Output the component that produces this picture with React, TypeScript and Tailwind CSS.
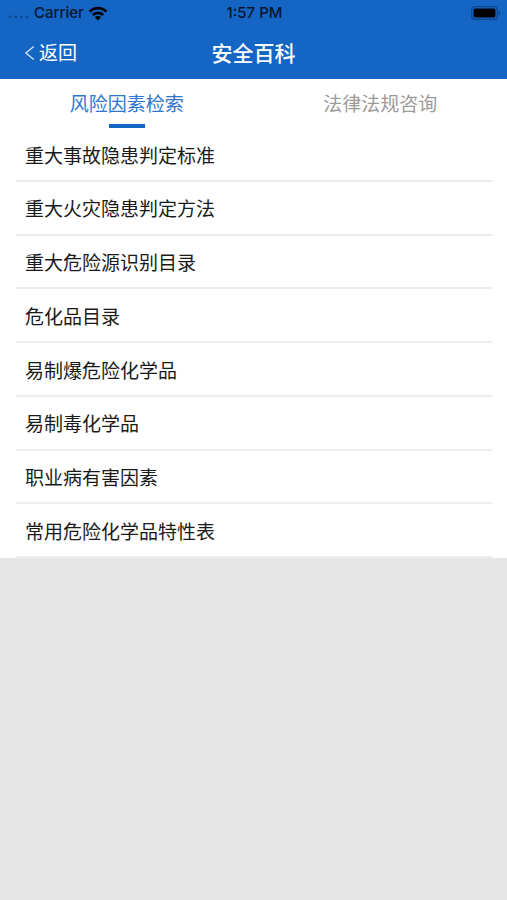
import { useState } from 'react';

const tabs = ['风险因素检索', '法律法规咨询'];

const riskItems = [
  '重大事故隐患判定标准',
  '重大火灾隐患判定方法',
  '重大危险源识别目录',
  '危化品目录',
  '易制爆危险化学品',
  '易制毒化学品',
  '职业病有害因素',
  '常用危险化学品特性表',
];

export default function App() {
  const [active, setActive] = useState(0);

  return (
    <div className="min-h-screen bg-[#e6e6e6] font-['Noto_Sans_CJK_SC',sans-serif] text-[19px]">
      <header className="bg-[#1565c4]">
        <StatusBar />
        <NavBar />
      </header>

      <main className="bg-white">
        <div role="tablist" className="grid h-[49px] grid-cols-2">
          {tabs.map((tab, index) => (
            <button
              key={tab}
              type="button"
              role="tab"
              aria-selected={active === index}
              onClick={() => setActive(index)}
              className={`flex flex-col items-center justify-between pt-3 leading-6 ${
                active === index ? 'text-[#2f76cc]' : 'text-[#9b9b9b]'
              }`}
            >
              {tab}
              <span className={`h-1 w-9 ${active === index ? 'bg-[#1565c4]' : ''}`} />
            </button>
          ))}
        </div>

        <ul className="mr-[15px] ml-4 grid h-[430px] auto-rows-fr">
          {riskItems.map((item) => (
            <li key={item} className="border-b-2 border-[#ededed]">
              <a href="#" className="flex h-full items-center px-[9px] pt-[2px] text-[#1a1a1a]">
                {item}
              </a>
            </li>
          ))}
        </ul>
      </main>
    </div>
  );
}

function StatusBar() {
  return (
    <div className="grid h-[26px] grid-cols-3 items-center pr-[6px] pl-2 font-['Inter',sans-serif] text-[15px] leading-6 font-medium text-[#06152b]">
      <div className="flex items-center gap-1">
        {/* Signal dots */}
        <svg width="22" height="14" viewBox="0 0 22 14" fill="#0f4a90" aria-hidden="true">
          <circle cx="2" cy="11" r="1.4" />
          <circle cx="7.7" cy="11" r="1.4" />
          <circle cx="13.4" cy="11" r="1.4" />
          <circle cx="19" cy="11" r="1.4" />
        </svg>
        Carrier
        <svg width="20" height="15" viewBox="0 0 20 15" fill="none" stroke="#000" strokeWidth="2.6" aria-hidden="true">
          <path d="M1.6 5.6a12 12 0 0 1 16.8 0" />
          <path d="M4.8 9a7.4 7.4 0 0 1 10.4 0" />
          <path d="M10 14.4 6.9 11.2a4.4 4.4 0 0 1 6.2 0Z" fill="#000" stroke="none" />
        </svg>
      </div>
      <span className="text-center">1:57 PM</span>
      {/* Battery */}
      <svg className="justify-self-end" width="30" height="14" viewBox="0 0 30 14" aria-hidden="true">
        <rect x="0.7" y="0.7" width="25.6" height="12.6" rx="3.4" fill="none" stroke="#0e4688" strokeWidth="1.2" />
        <rect x="2.6" y="2.6" width="21.8" height="8.8" rx="1.6" fill="#000" />
        <path d="M27.6 4.8c2.2.6 2.2 3.8 0 4.4Z" fill="#0e4688" />
      </svg>
    </div>
  );
}

function NavBar() {
  return (
    <div className="grid h-[53px] grid-cols-3 items-center text-white">
      <button type="button" className="flex items-center gap-1 pl-6">
        <svg width="11" height="16" viewBox="0 0 11 16" fill="none" stroke="#d6e6fa" strokeWidth="1.3" aria-hidden="true">
          <path d="M9.8 1.4 1.8 8l8 6.6" />
        </svg>
        返回
      </button>
      <h1 className="pb-[2px] text-center text-[21px] leading-8 font-medium">安全百科</h1>
    </div>
  );
}
